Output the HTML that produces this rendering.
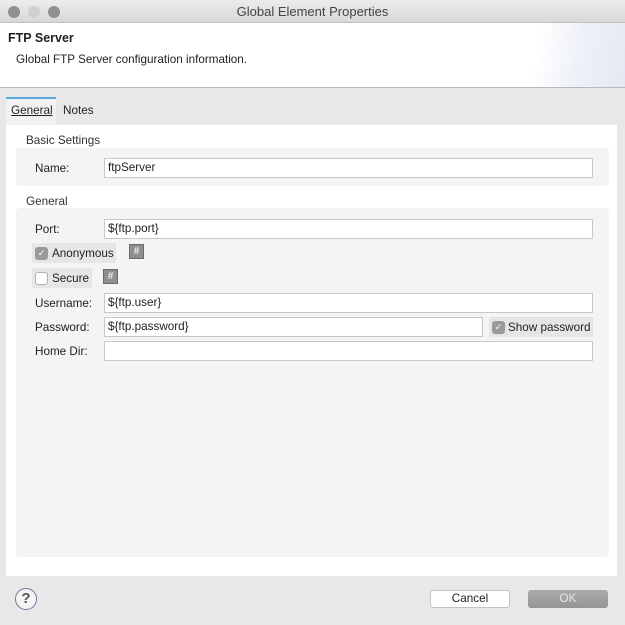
<!DOCTYPE html>
<html><head><style>
*{box-sizing:border-box;margin:0;padding:0}
body{width:625px;height:625px;overflow:hidden;font-family:"Liberation Sans",sans-serif;font-size:11.7px;color:#222;background:#e8e8e8;position:relative}
.a{position:absolute}
.inp{position:absolute;background:#fff;border:1px solid #c8c8c8;height:20px;padding:2px 3px;font-size:11.7px;line-height:14px}
.lbl{position:absolute;font-size:11.7px}
.cb{position:absolute;width:13px;height:13px;border-radius:3px}
.hash{position:absolute;width:15px;height:15px;background:#8f8f8f;border:1px solid #6a6a6a;color:#eee;font-size:10px;font-weight:bold;text-align:center;line-height:13px}
</style></head><body>
<div class="a" style="left:0;top:0;width:625px;height:23px;background:linear-gradient(#ececec,#d8d8d8);border-bottom:1px solid #c0c0c0;text-align:center;font-size:13px;line-height:23px;color:#444">Global Element Properties</div>
<div class="a" style="left:8px;top:6px;width:12px;height:12px;border-radius:6px;background:#909090"></div>
<div class="a" style="left:28px;top:6px;width:12px;height:12px;border-radius:6px;background:#d0d0d0"></div>
<div class="a" style="left:48px;top:6px;width:12px;height:12px;border-radius:6px;background:#909090"></div>
<div class="a" style="left:0;top:23px;width:625px;height:65px;background:linear-gradient(100deg,#fff 85%,#eef1f8 92%,#e3e8f4);border-bottom:1px solid #b8b8b8"></div>
<div class="a" style="left:8px;top:31px;font-weight:bold;font-size:12.5px">FTP Server</div>
<div class="a" style="left:16px;top:53px">Global FTP Server configuration information.</div>
<div class="a" style="left:6px;top:97px;width:50px;height:29px;background:#f2f2f2;border-top:2px solid #5aa9de"></div>
<div class="a" style="left:11px;top:104px;text-decoration:underline">General</div>
<div class="a" style="left:63px;top:104px">Notes</div>
<div class="a" style="left:6px;top:125px;width:611px;height:451px;background:#fff"></div>
<div class="a" style="left:26px;top:134px;color:#333">Basic Settings</div>
<div class="a" style="left:16px;top:148px;width:593px;height:38px;background:#f4f4f4;border-radius:4px"></div>
<div class="lbl" style="left:35px;top:162px">Name:</div>
<div class="inp" style="left:104px;top:158px;width:489px">ftpServer</div>
<div class="a" style="left:26px;top:195px;color:#333">General</div>
<div class="a" style="left:16px;top:208px;width:593px;height:349px;background:#f4f4f4;border-radius:4px"></div>
<div class="lbl" style="left:35px;top:223px">Port:</div>
<div class="inp" style="left:104px;top:219px;width:489px">${ftp.port}</div>
<div class="a" style="left:32px;top:243px;width:84px;height:20px;background:#e6e6e6"></div>
<div class="cb" style="left:35px;top:247px;background:#9a9a9a;color:#fff;font-size:9px;text-align:center;line-height:13px">✓</div>
<div class="lbl" style="left:52px;top:247px">Anonymous</div>
<div class="hash" style="left:129px;top:244px">#</div>
<div class="a" style="left:32px;top:268px;width:60px;height:20px;background:#e6e6e6"></div>
<div class="cb" style="left:35px;top:272px;background:#fff;border:1px solid #b0b0b0"></div>
<div class="lbl" style="left:52px;top:272px">Secure</div>
<div class="hash" style="left:103px;top:269px">#</div>
<div class="lbl" style="left:35px;top:297px">Username:</div>
<div class="inp" style="left:104px;top:293px;width:489px">${ftp.user}</div>
<div class="lbl" style="left:35px;top:321px">Password:</div>
<div class="inp" style="left:104px;top:317px;width:379px">${ftp.password}</div>
<div class="a" style="left:489px;top:317px;width:104px;height:20px;background:#e6e6e6"></div>
<div class="cb" style="left:492px;top:321px;background:#9a9a9a;color:#fff;font-size:9px;text-align:center;line-height:13px">✓</div>
<div class="lbl" style="left:508px;top:321px">Show password</div>
<div class="lbl" style="left:35px;top:345px">Home Dir:</div>
<div class="inp" style="left:104px;top:341px;width:489px"></div>
<div class="a" style="left:15px;top:588px;width:22px;height:22px;border-radius:11px;border:1.5px solid #6a7a9a;background:#f4f4f4;color:#555;font-weight:bold;font-size:15px;text-align:center;line-height:19px">?</div>
<div class="a" style="left:430px;top:590px;width:80px;height:18px;background:#fff;border:1px solid #c4c4c4;border-radius:3px;text-align:center;line-height:16px">Cancel</div>
<div class="a" style="left:528px;top:590px;width:80px;height:18px;background:linear-gradient(#aaa,#959595);border-radius:3px;text-align:center;line-height:18px;color:#e8e8e8">OK</div>
</body></html>
